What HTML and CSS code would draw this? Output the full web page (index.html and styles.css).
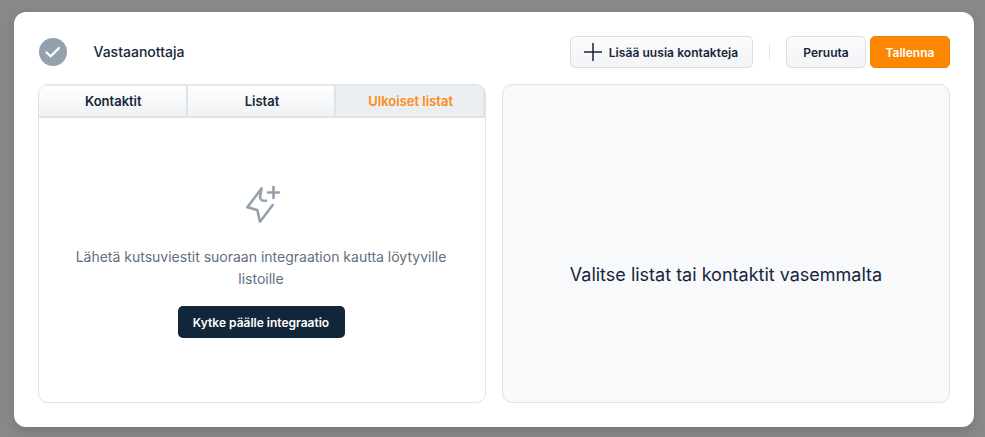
FILE: index.html
```html
<!DOCTYPE html>
<html lang="fi">
<head>
<meta charset="utf-8">
<title>Vastaanottaja</title>
<link rel="stylesheet" href="styles.css">
</head>
<body>
<main class="card">
  <header class="head">
    <div class="title">
      <svg class="check" viewBox="0 0 28 28" width="28" height="28"><circle cx="14" cy="14" r="14" fill="#94a0ae"/><path d="M7.500 14.500l4.200 3.800L20 10" fill="none" stroke="#fff" stroke-width="2.300" stroke-linecap="round" stroke-linejoin="round"/></svg>
      <span class="title-text">Vastaanottaja</span>
    </div>
    <div class="actions">
      <button class="btn btn-add">
        <svg viewBox="0 0 20 20" width="20" height="20"><path d="M10 1v18M1 10h18" fill="none" stroke="#16263a" stroke-width="1.500"/></svg>
        Lisää uusia kontakteja
      </button>
      <span class="sep"></span>
      <button class="btn btn-cancel">Peruuta</button>
      <button class="btn btn-save">Tallenna</button>
    </div>
  </header>
  <div class="cols">
    <section class="panel left">
      <nav class="tabs">
        <div class="tab">Kontaktit</div>
        <div class="tab">Listat</div>
        <div class="tab active">Ulkoiset listat</div>
      </nav>
      <div class="empty">
        <svg class="spark" viewBox="0 0 40 40" width="40" height="40"><path d="M25 16.700h-2a4 4 0 0 1-4-4L20.700 4.300 6.300 23.300 16.300 26 19 37.700 31.700 21M32.500 3v11M27 8.500h11" fill="none" stroke="#94a0ae" stroke-width="2.600" stroke-linecap="round" stroke-linejoin="round"/></svg>
        <p class="msg">Lähetä kutsuviestit suoraan integraation kautta löytyville listoille</p>
        <button class="btn-dark">Kytke päälle integraatio</button>
      </div>
    </section>
    <section class="panel right">
      <p class="hint">Valitse listat tai kontaktit vasemmalta</p>
    </section>
  </div>
</main>
</body>
</html>
```
FILE: styles.css
```css
* { box-sizing: border-box; }
html, body { margin: 0; height: 100%; }
body {
  background: #888888;
  padding: 12px 11px 10px 14px;
  font-family: Inter, "Liberation Sans", sans-serif;
  color: #16263a;
  overflow: hidden;
}
.card {
  width: 960px;
  height: 415px;
  background: #fff;
  border-radius: 12px;
  padding: 24px;
  box-shadow: 0 4px 10px rgba(0,0,0,.12);
  display: flex;
  flex-direction: column;
  gap: 16px;
}
.head {
  display: flex;
  justify-content: space-between;
  align-items: center;
  height: 32px;
}
.title { display: flex; align-items: center; gap: 26.5px; padding-left: 1px; }
.check { display: block; }
.title-text { font-size: 14px; font-weight: 500; padding-bottom: 2px; }
.actions { display: flex; align-items: center; }
.btn {
  height: 32px;
  border-radius: 5px;
  border: 1px solid #d9dee3;
  background: linear-gradient(#fcfcfd, #f3f4f6);
  font: 600 12px Inter, "Liberation Sans", sans-serif;
  color: #16263a;
  display: flex;
  align-items: center;
  justify-content: center;
  padding: 0;
}
.btn-add { width: 183px; gap: 6px; padding-right: 2px; letter-spacing: .005em; }
.sep { width: 1px; height: 16px; background: #e1e5e9; margin: 0 16px; }
.btn-cancel { width: 80px; margin-right: 4px; }
.btn-save { width: 80px; background: #fd8700; border-color: #ee8000; color: #fff; }
.cols { display: flex; gap: 16px; height: 319px; }
.panel {
  flex: 1;
  border: 1px solid #dde3e9;
  border-radius: 10px;
  overflow: hidden;
}
.left { display: flex; flex-direction: column; }
.tabs { display: grid; grid-template-columns: repeat(3, 1fr); height: 33px; flex: none; }
.tab {
  display: flex;
  align-items: center;
  justify-content: center;
  padding-left: 2px;
  font-size: 13px;
  font-weight: 600;
  background: linear-gradient(#ffffff, #eff1f3);
  border-right: 2px solid #dde3e9;
  border-bottom: 2px solid #dde3e9;
  border-top: 1px solid #e8ecef;
}
.tab.active { background: #ebeff2; color: #fd8a14; }
.empty {
  flex: 1;
  display: flex;
  flex-direction: column;
  align-items: center;
  padding: 66px 26px 0 24px;
}
.spark { display: block; }
.msg {
  margin: 22px 0 0;
  font-size: 14px;
  line-height: 22px;
  color: #5f6f80;
  text-align: center;
}
.btn-dark {
  margin-top: 16px;
  width: 167px;
  height: 32px;
  border: 0;
  border-radius: 5px;
  background: #12263a;
  color: #fff;
  font: 600 12px Inter, "Liberation Sans", sans-serif;
}
.right {
  background: #f8f9fb;
  display: flex;
  align-items: center;
  justify-content: center;
}
.hint { margin: 0; font-size: 18px; line-height: 24px; color: #16263a; padding-top: 62px; }
```
